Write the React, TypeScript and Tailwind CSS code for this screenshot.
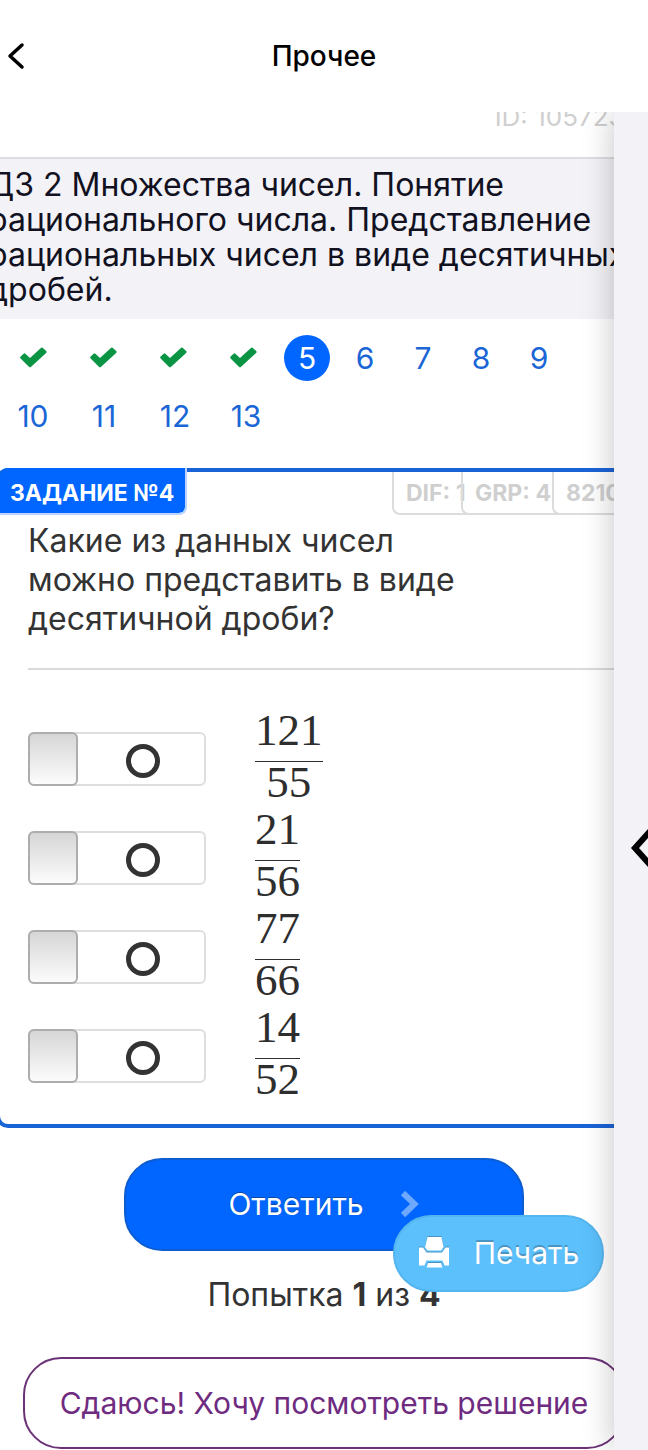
const solved = [1, 2, 3, 4];
const nextInRow = [6, 7, 8, 9];
const secondRow = [10, 11, 12, 13];

const options = [
  { top: "121", bottom: "55" },
  { top: "21", bottom: "56" },
  { top: "77", bottom: "66" },
  { top: "14", bottom: "52" },
];

function Header() {
  return (
    <header className="relative z-30 h-28 bg-white flex items-center justify-center">
      <button type="button" aria-label="Назад" className="absolute left-1 top-10 w-6 h-8 flex items-center justify-center">
        <svg width="24" height="32" viewBox="0 0 24 32" fill="none" stroke="#000" strokeWidth="3.5" strokeLinecap="round" strokeLinejoin="round">
          <path d="M18 5 L6 16 L18 27" />
        </svg>
      </button>
      <h1 className="text-[28px] leading-9 font-medium text-black">Прочее</h1>
    </header>
  );
}

function CheckIcon() {
  return (
    <svg width="27" height="22" viewBox="0 0 27 22" fill="#0a9444" stroke="#0a9444" strokeWidth="2.5" strokeLinejoin="round" aria-hidden="true">
      <path d="M4.5 7.6 L10 12.6 L22 1.8 L25.3 5 L10 19 L1.5 10.5 Z" />
    </svg>
  );
}

function ArrowIcon() {
  return (
    <svg width="20" height="28" viewBox="0 0 20 28" fill="none" stroke="#6fa9ff" strokeWidth="6" aria-hidden="true">
      <path d="M3 2 L14.5 13 L3 24" />
    </svg>
  );
}

function PrintIcon() {
  return (
    <svg width="32" height="36" viewBox="0 0 32 36" fill="#fff" aria-hidden="true" className="drop-shadow-[0_-1px_0_#4a94c4]">
      <path d="M9.5 1 H23.5 L25.5 11 L23 14.5 H9.5 L7 11 Z" />
      <path d="M1 11.5 H5 L8.5 16.5 H24 L27.5 11.5 H31 V29.5 H26.5 L24.5 24.5 H8.5 L6.5 29.5 H1 Z" />
      <path d="M10 27 H23 L24.5 31.5 H8.5 Z" />
    </svg>
  );
}

function TaskNav() {
  return (
    <nav className="pl-1 pt-4 pb-[29px] text-[30px] leading-[46px] text-[#1a66d6]">
      <div className="flex gap-3 h-[46px]">
        {solved.map((n) => (
          <a key={n} href={`#task-${n}`} aria-label={`Задание ${n}`} className="w-[58px] flex items-center justify-center">
            <CheckIcon />
          </a>
        ))}
        <a href="#task-5" className="w-[46px] rounded-full bg-[#0066ff] text-center text-white">5</a>
        {nextInRow.map((n) => (
          <a key={n} href={`#task-${n}`} className="w-[46px] text-center">{n}</a>
        ))}
      </div>
      <div className="flex gap-[13px] h-[46px] mt-3">
        {secondRow.map((n) => (
          <a key={n} href={`#task-${n}`} className="w-[58px] text-center">{n}</a>
        ))}
      </div>
    </nav>
  );
}

function Option({ top, bottom }: { top: string; bottom: string }) {
  return (
    <label className="flex items-center h-[99px] gap-[49px]">
      <input
        type="checkbox"
        className="appearance-none shrink-0 flex items-center w-[178px] h-[54px] rounded-md border-2 border-[#dedede] bg-white before:content-[''] before:w-[50px] before:h-[54px] before:-ml-0.5 before:shrink-0 before:rounded-md before:border-2 before:border-[#adadad] before:bg-linear-to-b before:from-[#d6d6d6] before:to-[#fcfcfc] after:content-[''] after:w-[34px] after:h-[34px] after:ml-auto after:mr-11 after:mt-1 after:rounded-full after:border-5 after:border-[#333]"
      />
      <span className="inline-flex flex-col text-center font-['Liberation_Serif',serif] text-[45px] text-[#2e2e2e]">
        <span className="h-[53px] border-b border-[#2e2e2e] leading-[42px]">{top}</span>
        <span className="h-[46px] leading-[40px]">{bottom}</span>
      </span>
    </label>
  );
}

function TaskCard() {
  return (
    <section className="-mx-1 border-4 border-[#1a63d6] rounded-xl pb-[19px]">
      <div className="flex justify-between -mt-1 h-[47px]">
        <h3 className="w-[187px] h-[47px] pl-[10px] pt-0.5 border-r-2 border-b-2 border-[#b8d4fb] rounded-br-lg rounded-tl-lg bg-[#0066ff] bg-clip-padding text-[23px] leading-[46px] font-bold text-white whitespace-nowrap">
          ЗАДАНИЕ №4
        </h3>
        <div className="flex mt-1 h-[43px] w-[256px] text-[23px] leading-[42px] font-bold text-[#cfcfcf] whitespace-nowrap">
          <span className="w-[77px] -mr-2 shrink-0 pl-3 border-l-2 border-b-2 border-[#dcdcdc] rounded-bl-lg">DIF: 1</span>
          <span className="w-[99px] -mr-2 shrink-0 pl-3 border-l-2 border-b-2 border-[#dcdcdc] rounded-bl-lg">GRP: 4</span>
          <span className="w-[96px] shrink-0 pl-3 border-l-2 border-b-2 border-[#dcdcdc] rounded-bl-lg">82100</span>
        </div>
      </div>
      <div className="pl-7">
        <p className="max-w-[480px] pt-1.5 pb-[30px] text-[32px] leading-[39px] text-[#333]">
          Какие из данных чисел можно представить в виде десятичной дроби?
        </p>
        <hr className="border-t-2 border-[#dadada] mb-[39px]" />
        {options.map((o) => (
          <Option key={o.top} top={o.top} bottom={o.bottom} />
        ))}
      </div>
    </section>
  );
}

function Actions() {
  return (
    <div className="relative pt-[30px] px-[23px] flex flex-col items-center">
      <button type="submit" className="w-[400px] h-[93px] flex items-center justify-center gap-9 rounded-[38px] border-2 border-[#0d5cd0] bg-[#0066ff] text-[30px] text-white [text-shadow:0_-1px_0_#0d4aa8]">
        Ответить
        <ArrowIcon />
      </button>
      <p className="mt-6 text-[32px] leading-[39px] text-[#333]">
        Попытка <b>1</b> из <b>4</b>
      </p>
      <button type="button" className="mt-[43px] w-full h-[92px] rounded-[38px] border-2 border-[#6b3278] bg-white text-[30px] text-[#6e2b80] whitespace-nowrap">
        Сдаюсь! Хочу посмотреть решение
      </button>
      {/* floats above the answer button */}
      <button type="button" className="absolute right-11 top-[87px] w-[211px] h-[77px] flex items-center justify-center gap-6 rounded-full border-2 border-[#55b5ee] bg-[#5bc0fc] text-[30px] text-white [text-shadow:0_-2px_0_#4a94c4]">
        <PrintIcon />
        Печать
      </button>
    </div>
  );
}

function Drawer() {
  return (
    <aside className="absolute z-20 right-0 top-28 bottom-0 w-[34px] bg-[#f2f2f7] shadow-[0_0_32px_rgba(0,0,0,0.24)]">
      <button type="button" aria-label="Открыть панель" className="block mt-[716px] ml-4 w-[18px] h-10 overflow-hidden">
        <svg width="18" height="40" viewBox="0 0 18 40" fill="none" stroke="#000" strokeWidth="6">
          <path d="M22 1 L5 20 L22 39" />
        </svg>
      </button>
    </aside>
  );
}

export default function App() {
  return (
    <div className="relative min-h-screen overflow-hidden bg-white pb-px font-[Inter,sans-serif]">
      <Header />
      <main>
        <div className="h-[45px] pr-[7px] overflow-hidden text-right text-[26px] leading-[10px] text-[#cfcfcf]">
          ID: 1057230
        </div>
        <h2 className="-ml-3 border-t-2 border-[#dddde0] bg-[#f2f2f7] pt-2 pb-3 text-[32px] leading-[35px] text-[#11111f] whitespace-nowrap">
          ДЗ 2 Множества чисел. Понятие
          <br />
          рационального числа. Представление
          <br />
          рациональных чисел в виде десятичных
          <br />
          дробей.
        </h2>
        <TaskNav />
        <TaskCard />
        <Actions />
      </main>
      <Drawer />
    </div>
  );
}
